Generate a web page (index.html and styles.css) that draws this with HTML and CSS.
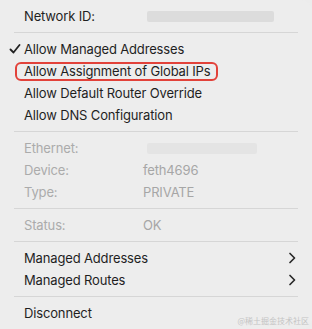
FILE: index.html
```html
<!DOCTYPE html>
<html lang="en">
<head>
  <meta charset="UTF-8">
  <title>Network Menu</title>
  <link rel="stylesheet" href="styles.css">
</head>
<body>

<div class="menu">
  <div class="row">
    <span class="label">Network ID:</span>
    <span class="blur blur-id"></span>
  </div>

  <div class="sep"></div>

  <div class="row item">
    <svg class="check" width="12" height="10" viewBox="0 0 12 10"><path d="M1.5 5.5 L4.5 8.5 L10.5 1" fill="none" stroke="#222" stroke-width="1.8" stroke-linecap="round" stroke-linejoin="round"/></svg>
    Allow Managed Addresses
  </div>
  <div class="row item"><span class="marked">Allow Assignment of Global IPs</span></div>
  <div class="row item">Allow Default Router Override</div>
  <div class="row item">Allow DNS Configuration</div>

  <div class="sep"></div>

  <div class="row off">
    <span class="label">Ethernet:</span>
    <span class="blur blur-eth"></span>
  </div>
  <div class="row off">
    <span class="label">Device:</span>
    <span class="value">feth4696</span>
  </div>
  <div class="row off">
    <span class="label">Type:</span>
    <span class="value">PRIVATE</span>
  </div>

  <div class="sep"></div>

  <div class="row off">
    <span class="label">Status:</span>
    <span class="value">OK</span>
  </div>

  <div class="sep"></div>

  <div class="row item">Managed Addresses
    <svg class="chev" width="8" height="12" viewBox="0 0 8 12"><path d="M2 1.5 L6.5 6 L2 10.5" fill="none" stroke="#2a2a2a" stroke-width="1.7" stroke-linecap="round" stroke-linejoin="round"/></svg>
  </div>
  <div class="row item">Managed Routes
    <svg class="chev" width="8" height="12" viewBox="0 0 8 12"><path d="M2 1.5 L6.5 6 L2 10.5" fill="none" stroke="#2a2a2a" stroke-width="1.7" stroke-linecap="round" stroke-linejoin="round"/></svg>
  </div>

  <div class="sep"></div>

  <div class="row item">Disconnect</div>

  <span class="mark">@稀土掘金技术社区</span>
</div>

</body>
</html>
```

FILE: styles.css
```css
html, body {
  margin: 0;
  background: #ececec;
}
.menu {
  position: relative;
  width: 312px;
  height: 329px;
  box-sizing: border-box;
  padding: 5px 0 0 0;
  font-family: Inter, "Noto Sans", sans-serif;
  font-size: 13px;
  letter-spacing: -0.15px;
  color: #1f1f1f;
  background: #ededed;
  border-radius: 0 10px 10px 0;
}
.row {
  display: flex;
  align-items: center;
  height: 22px;
  padding-left: 24px;
  position: relative;
}
.label {
  width: 123px;
}
.off {
  color: #ababab;
}
.value {
  color: #a6a6a6;
  margin-left: -4px;
}
.blur {
  display: block;
  height: 11px;
  background: #dcdcdc;
  border-radius: 2px;
}
.blur-id {
  width: 127px;
}
.blur-eth {
  width: 110px;
  background: #e4e4e4;
}
.check {
  position: absolute;
  left: 9px;
  top: 6px;
}
.marked {
  display: inline-block;
  margin-left: -9px;
  padding: 0 6px 0 7px;
  line-height: 15px;
  border: 2px solid #e2423a;
  border-radius: 6px;
}
.sep {
  height: 1px;
  margin: 5px 14px;
  background: #d6d6d6;
}
.chev {
  position: absolute;
  right: 16px;
  top: 5px;
}
.mark {
  position: absolute;
  right: 3px;
  bottom: 3px;
  font-size: 8px;
  letter-spacing: 0;
  color: #c4c4c4;
  font-family: "Noto Sans CJK SC", sans-serif;
}
```
